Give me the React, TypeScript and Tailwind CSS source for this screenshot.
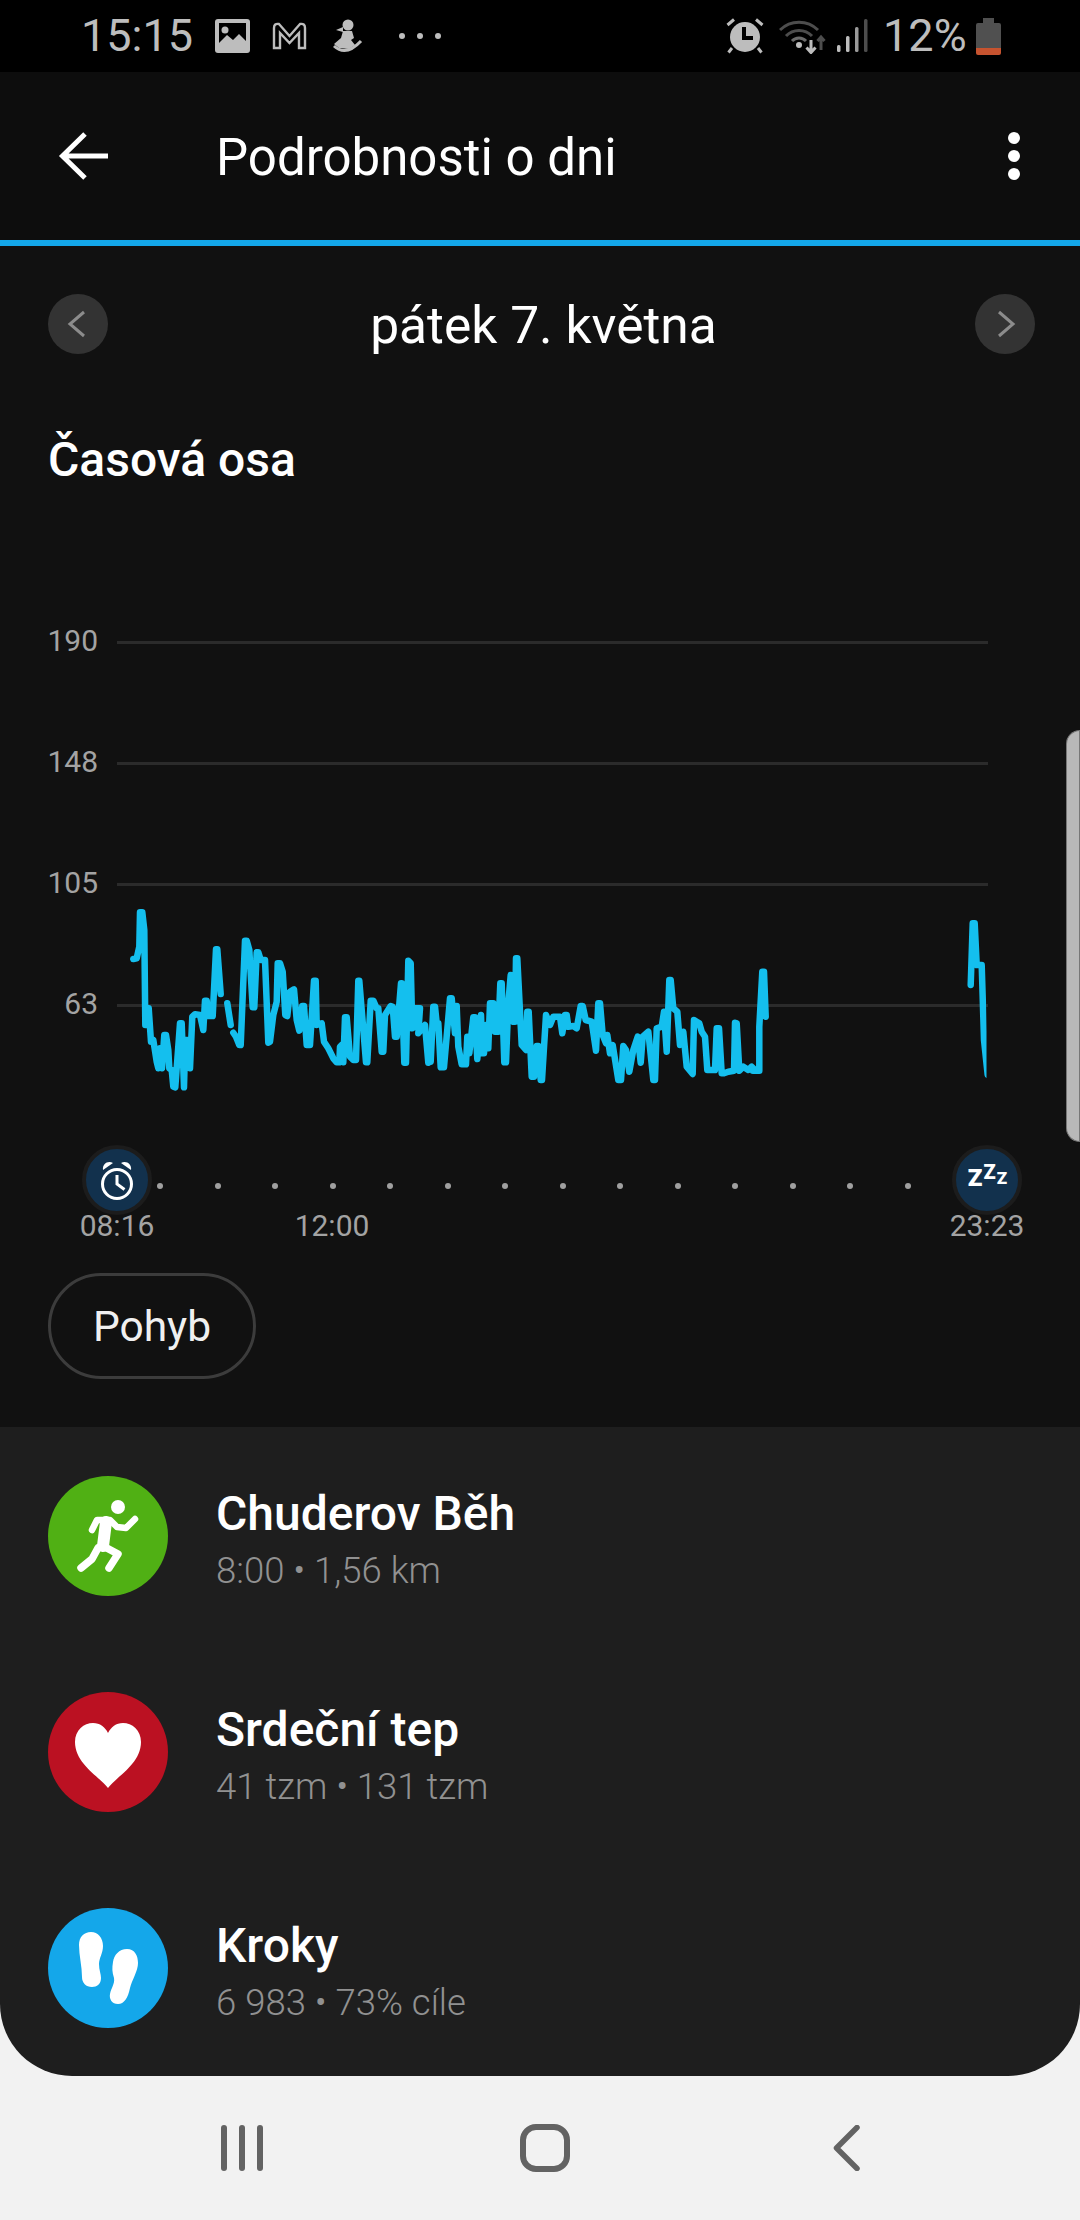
const gridLines = [
  { label: "190", y: 642.5 },
  { label: "148", y: 763.5 },
  { label: "105", y: 884.5 },
  { label: "63", y: 1005.5 },
];

// heart rate trace, sampled at 3x from the chart; each run has its own origin
const toPoints = (raw: number[][], ox: number, oy: number) =>
  raw.map(([x, y]) => `${(x / 3 + ox).toFixed(1)},${(y / 3 + oy).toFixed(1)}`).join(" ");

const runA = [
  [100, 237], [110, 235], [118, 200], [120, 97], [127, 97], [133, 150], [136, 435], [143, 435], [146, 385], [153, 485],
  [160, 480], [170, 545], [175, 565], [180, 505], [186, 565], [193, 465], [198, 465], [205, 510], [208, 565], [215, 570],
  [220, 620], [226, 622], [240, 430], [245, 430], [252, 622], [256, 480], [262, 480], [270, 565], [277, 410], [285, 403],
  [300, 405], [310, 450], [315, 362], [320, 362], [325, 408], [338, 408], [348, 208], [352, 208], [362, 342],
];
const runB = [[382, 370], [392, 435]];
const runC = [
  [400, 458], [408, 470], [418, 495], [422, 495], [435, 182], [440, 182], [448, 210], [458, 382], [463, 382], [470, 217],
  [475, 217], [482, 240], [495, 240], [505, 488], [510, 485], [520, 405], [530, 365], [533, 250], [540, 250], [548, 275],
  [556, 405], [562, 408], [570, 335], [582, 328], [590, 420], [598, 452], [607, 378], [612, 378], [620, 495], [630, 495],
  [642, 302], [647, 302], [650, 435], [665, 430], [672, 485], [685, 505], [700, 535], [710, 547], [718, 547], [720, 500],
  [725, 495], [730, 547], [735, 412], [740, 412], [750, 530], [760, 540], [768, 540], [775, 302], [778, 302], [798, 547],
  [802, 547], [812, 362], [820, 362], [830, 385], [835, 385], [845, 515], [850, 515], [855, 405], [872, 378], [878, 380],
  [885, 470], [890, 470], [903, 310], [905, 310], [913, 548], [918, 548], [925, 242], [932, 250], [937, 445], [945, 385],
  [960, 385], [955, 460], [975, 435], [985, 548],
];
const runD = [
  [25, 545], [32, 545], [40, 380], [45, 380], [50, 430], [55, 430], [62, 562], [72, 562], [90, 355], [95, 355],
  [105, 460], [110, 378], [115, 500], [125, 553], [138, 553], [142, 470], [148, 520], [160, 412], [165, 412], [172, 537],
  [183, 405], [187, 520], [192, 520], [198, 435], [205, 505], [210, 370], [220, 370], [225, 455], [235, 455], [241, 310],
  [245, 310], [253, 547], [258, 547], [265, 370], [272, 285], [280, 425], [285, 425], [288, 235], [292, 235], [305, 495],
  [318, 510], [322, 395], [326, 395], [335, 590], [342, 590], [350, 498], [355, 498], [362, 600], [366, 600], [378, 405],
  [390, 435], [400, 410], [420, 410], [427, 460], [435, 405], [440, 405], [445, 440], [460, 438], [470, 445], [482, 378],
  [488, 378], [497, 420], [515, 425], [528, 512], [535, 370], [540, 370], [548, 465], [558, 490], [562, 465], [570, 520],
  [578, 495], [595, 600], [603, 600], [610, 498], [618, 510], [628, 575], [640, 510], [653, 470], [662, 548], [668, 470],
  [685, 455], [700, 600], [705, 600], [710, 445], [725, 440], [732, 395], [740, 515], [748, 300], [752, 300], [760, 385],
  [772, 395], [780, 495], [790, 455], [800, 560], [818, 582], [822, 420], [830, 425], [838, 430], [845, 455], [855, 470],
  [862, 570], [885, 570], [890, 445], [897, 445], [905, 580], [912, 580], [925, 575], [942, 572], [945, 428], [950, 430],
  [958, 572], [970, 560], [985, 570], [995, 560], [1005, 570],
];
const runE = [[158, 362], [178, 362], [178, 230], [187, 65], [192, 65], [197, 200]];
const runF = [[122, 255], [128, 70], [134, 70], [140, 195], [155, 195], [162, 420], [173, 525]];

const firstPart = toPoints(runA, 100, 880);
const secondPart = toPoints(runB, 100, 880);
const thirdPart = `${toPoints(runC, 100, 880)} ${toPoints(runD, 420, 880)} ${toPoints(runE, 700, 950)}`;
const lastPart = toPoints(runF, 930, 900);

const dots = Array.from({ length: 14 }, (_, i) => i);

function StatusBar() {
  return (
    <div className="flex h-[72px] shrink-0 items-center bg-black pl-[81px] text-[#bdbdbd]">
      <span className="text-[45px] leading-[72px]">15:15</span>
      <svg className="ml-[22px]" width="35" height="34" viewBox="0 0 35 34">
        <rect width="35" height="34" rx="3" fill="#bdbdbd" />
        <rect x="4" y="4" width="27" height="24" fill="#000" />
        <circle cx="10" cy="11" r="3.5" fill="#bdbdbd" />
        <path d="M4 24 12 16 18 21 24 15 31 22V28H4Z" fill="#bdbdbd" />
      </svg>
      <svg className="ml-[22px]" width="35" height="28" viewBox="0 0 35 28">
        <path d="M2 26V6Q2 1 7 2L17.5 14 28 2Q33 1 33 6V26H27V11L17.5 21 8 11V26Z" fill="none" stroke="#bdbdbd" strokeWidth="2.4" />
      </svg>
      <svg className="ml-[25px]" width="31" height="34" viewBox="0 0 31 34">
        <circle cx="16" cy="6" r="5.5" fill="#bdbdbd" />
        <path d="M11 8 4 11 11 13Z" fill="#bdbdbd" />
        <path d="M11 12H20L22 19 19 21 23 26 17 30 7 29 2 25 9 19Z" fill="#bdbdbd" />
        <path d="M2 27Q14 38 29 22" fill="none" stroke="#bdbdbd" strokeWidth="3" />
      </svg>
      <div className="ml-[36px] flex gap-[12px]">
        <span className="h-[6px] w-[6px] rounded-full bg-[#bdbdbd]" />
        <span className="h-[6px] w-[6px] rounded-full bg-[#bdbdbd]" />
        <span className="h-[6px] w-[6px] rounded-full bg-[#bdbdbd]" />
      </div>
      <svg className="ml-[285px]" width="38" height="36" viewBox="0 0 38 36">
        <circle cx="19" cy="19" r="15" fill="#bdbdbd" />
        <path d="M18 9V20H27" fill="none" stroke="#000" strokeWidth="4" />
        <path d="M1.500 7 8 1.500M30 1.500 36.500 7M6 30 2.500 34.500M32 30 35.500 34.500" stroke="#bdbdbd" strokeWidth="3" />
      </svg>
      <svg className="ml-[15px]" width="48" height="36" viewBox="0 0 48 36">
        <path d="M1 12A27 27 0 0 1 39 12" fill="none" stroke="#4d4d4d" strokeWidth="3" />
        <path d="M7 18A18 18 0 0 1 33 18" fill="none" stroke="#4d4d4d" strokeWidth="3" />
        <path d="M13 23A9.500 9.500 0 0 1 27 23" fill="none" stroke="#6b6b6b" strokeWidth="3" />
        <circle cx="20" cy="27" r="3" fill="#bdbdbd" />
        <path d="M32 22V34M27.500 29.500 32 34.500 36.500 29.500" fill="none" stroke="#bdbdbd" strokeWidth="3" />
        <path d="M42 32V19M38.500 23 42 19 45.500 23" fill="none" stroke="#4d4d4d" strokeWidth="3" />
      </svg>
      <svg className="ml-[9px]" width="32" height="36" viewBox="0 0 32 36">
        <rect x="1" y="27" width="3.500" height="7" rx="1.500" fill="#bdbdbd" />
        <rect x="10" y="18" width="3.500" height="16" rx="1.500" fill="#bdbdbd" />
        <rect x="19" y="9" width="3.500" height="25" rx="1.500" fill="#9a9a9a" />
        <rect x="28" y="1" width="3.500" height="33" rx="1.500" fill="#4d4d4d" />
      </svg>
      <span className="ml-[15px] text-[45px] leading-[72px]">12%</span>
      <svg className="ml-[9px]" width="25" height="37" viewBox="0 0 25 37">
        <path d="M7 0H18V5H23Q25 5 25 7V30H0V7Q0 5 2 5H7Z" fill="#505050" />
        <path d="M0 30H25V35Q25 37 23 37H2Q0 37 0 35Z" fill="#c6532f" />
      </svg>
    </div>
  );
}

function Toolbar() {
  return (
    <div className="flex h-[168px] shrink-0 items-center bg-[#0d0d0d] text-white">
      <svg className="ml-[58px]" width="52" height="50" viewBox="0 0 52 50">
        <path d="M50 25H5M27 3 4.500 25 27 47" fill="none" stroke="#fff" strokeWidth="5" />
      </svg>
      <span className="ml-[106px] mt-[3px] text-[51px] leading-[60px]">Podrobnosti o dni</span>
      <div className="ml-auto mr-[60px] flex flex-col gap-[6px]">
        <span className="h-[12px] w-[12px] rounded-full bg-white" />
        <span className="h-[12px] w-[12px] rounded-full bg-white" />
        <span className="h-[12px] w-[12px] rounded-full bg-white" />
      </div>
    </div>
  );
}

function DayButton({ flip }: { flip?: boolean }) {
  return (
    <div className="flex h-[60px] w-[60px] items-center justify-center rounded-full bg-[#333333]">
      <svg width="60" height="60" viewBox="0 0 60 60">
        <path
          d={flip ? "M24 18 38 30 24 42" : "M36 18 22 30 36 42"}
          fill="none"
          stroke="#8c8c8c"
          strokeWidth="3"
        />
      </svg>
    </div>
  );
}

function Chart() {
  return (
    <svg className="block" width="1080" height="657" viewBox="0 488 1080 657">
      <defs>
        <clipPath id="plot">
          <rect x="90" y="488" width="896.500" height="657" />
        </clipPath>
      </defs>
      {gridLines.map((line) => (
        <g key={line.label}>
          <line x1="117" x2="988" y1={line.y} y2={line.y} stroke="#2b2b2b" strokeWidth="3" />
          <text
            x="98"
            y={line.y + 8}
            textAnchor="end"
            fontSize="30"
            fill="#a3a3a3"
            fontFamily="Roboto, sans-serif"
          >
            {line.label}
          </text>
        </g>
      ))}
      <g clipPath="url(#plot)" fill="none" stroke="#14bfee" strokeWidth="6.500" strokeLinejoin="round" strokeLinecap="round">
        <polyline points={firstPart} />
        <polyline points={secondPart} />
        <polyline points={thirdPart} />
        <polyline points={lastPart} />
      </g>
    </svg>
  );
}

function AlarmBadge() {
  return (
    <div className="flex h-[70px] w-[70px] items-center justify-center rounded-full border-[4px] border-[#1c1c1c] bg-[#12314d]">
      <svg width="62" height="62" viewBox="0 0 62 62">
        <circle cx="31" cy="35" r="14.500" fill="none" stroke="#fff" strokeWidth="3" />
        <path d="M31 26V35L38.500 40.500" fill="none" stroke="#fff" strokeWidth="3" />
        <path d="M17 21C16 15 22 11 27 14Z" fill="#fff" />
        <path d="M45 21C46 15 40 11 35 14Z" fill="#fff" />
      </svg>
    </div>
  );
}

function SleepBadge() {
  return (
    <div className="flex h-[70px] w-[70px] items-start justify-center rounded-full border-[4px] border-[#1c1c1c] bg-[#12314d] pl-[1px] pt-[16px] font-black leading-none text-white">
      <span className="mt-[3px] text-[24px] leading-[20px]">Z</span>
      <span className="ml-[1px] mt-[-3px] text-[20px] leading-[20px]">Z</span>
      <span className="ml-[1px] mt-[3px] text-[17px] leading-[20px]">Z</span>
    </div>
  );
}

function RunIcon() {
  return (
    <svg width="120" height="120" viewBox="0 0 120 120">
      <circle cx="70" cy="31" r="7" fill="#fff" />
      <path d="M44 54 49 44H62L69 51 78 52 87 43" fill="none" stroke="#fff" strokeWidth="6.500" strokeLinecap="round" strokeLinejoin="round" />
      <path d="M58 46 55 70" fill="none" stroke="#fff" strokeWidth="12" strokeLinecap="round" />
      <path d="M55 70 70 78 61 92" fill="none" stroke="#fff" strokeWidth="7.500" strokeLinecap="round" strokeLinejoin="round" />
      <path d="M50 72 44 83 33 92" fill="none" stroke="#fff" strokeWidth="7.500" strokeLinecap="round" strokeLinejoin="round" />
    </svg>
  );
}

function HeartIcon() {
  return (
    <svg width="120" height="120" viewBox="0 0 120 120">
      <path
        d="M60 96C52 85 27 72 27 50 27 38 36 31 45 31 52 31 57 35 60 41 63 35 68 31 75 31 84 31 93 38 93 50 93 72 68 85 60 96Z"
        fill="#fff"
      />
    </svg>
  );
}

function StepsIcon() {
  return (
    <svg width="120" height="120" viewBox="0 0 120 120">
      <path
        d="M43 24C50 24 55 30 55 38 55 45 51 50 51 56 51 62 53 66 53 70 53 76 49 79 44 79 38 79 34 75 34 69 34 58 31 48 31 37 31 29 36 24 43 24Z"
        fill="#fff"
      />
      <path
        d="M79 41C87 41 90 48 90 55 90 63 84 72 82 80 80 90 76 96 70 96 64 96 61 91 62 86 63 80 67 76 66 70 64 64 64 60 65 54 66 47 71 41 79 41Z"
        fill="#fff"
      />
    </svg>
  );
}

function ActivityRow({
  title,
  detail,
  iconClass,
  icon,
}: {
  title: string;
  detail: string;
  iconClass: string;
  icon: React.ReactNode;
}) {
  return (
    <div className="flex items-start gap-[48px]">
      <div className={`h-[120px] w-[120px] shrink-0 rounded-full ${iconClass}`}>{icon}</div>
      <div className="flex flex-col gap-[7px] pt-[10px]">
        <span className="text-[48px] font-medium leading-[56px] text-white">{title}</span>
        <span className="text-[36.500px] font-light leading-[44px] text-[#919191]">{detail}</span>
      </div>
    </div>
  );
}

export default function App() {
  return (
    <div className="relative flex h-[2220px] w-[1080px] flex-col overflow-hidden bg-[#f2f2f2] font-['Roboto',sans-serif]">
      <StatusBar />
      <Toolbar />
      <div className="h-[6px] shrink-0 bg-[#14a7ea]" />

      <div className="shrink-0 bg-[#111111] pb-[48px] pt-[48px]">
        <div className="flex h-[60px] items-start justify-between pl-[48px] pr-[45px]">
          <DayButton />
          <span className="ml-[4px] text-[51.500px] leading-[64px] text-white">pátek 7. května</span>
          <DayButton flip />
        </div>
        <h1 className="ml-[48px] mt-[78px] text-[48px] font-medium leading-[56px] text-white">Časová osa</h1>
        <Chart />
        <div className="ml-[82px] flex w-[940px]">
          <AlarmBadge />
          <div className="ml-[5px] mt-[38px] flex h-[6px] w-[754px] justify-between">
            {dots.map((dot) => (
              <span key={dot} className="h-[6px] w-[6px] rounded-full bg-[#a0a0a0]" />
            ))}
          </div>
          <div className="ml-auto">
            <SleepBadge />
          </div>
        </div>
        <div className="-mt-[5px] flex text-[30px] leading-[32px] text-[#a3a3a3]">
          <span className="ml-[57px] w-[120px] text-center">08:16</span>
          <span className="ml-[95px] w-[120px] text-center">12:00</span>
          <span className="ml-[535px] w-[120px] text-center">23:23</span>
        </div>
        <div className="ml-[48px] mt-[31px] flex h-[106px] w-[208px] items-center justify-center rounded-full border-[3px] border-[#3c3c3c] pt-[2px] text-[42.500px] text-[#f0f0f0]">
          Pohyb
        </div>
      </div>

      <div className="flex h-[649px] shrink-0 flex-col gap-[96px] rounded-b-[72px] bg-[#1e1e1e] px-[48px] pt-[49px]">
        <ActivityRow title="Chuderov Běh" detail="8:00 • 1,56 km" iconClass="bg-[#50b014]" icon={<RunIcon />} />
        <ActivityRow title="Srdeční tep" detail="41 tzm • 131 tzm" iconClass="bg-[#bb1122]" icon={<HeartIcon />} />
        <ActivityRow title="Kroky" detail="6 983 • 73% cíle" iconClass="bg-[#14a7ea]" icon={<StepsIcon />} />
      </div>

      <div className="flex flex-1 items-center bg-[#f2f2f2]">
        <div className="ml-[221px] flex gap-[12px]">
          <span className="h-[46px] w-[6px] rounded-full bg-[#636363]" />
          <span className="h-[46px] w-[6px] rounded-full bg-[#636363]" />
          <span className="h-[46px] w-[6px] rounded-full bg-[#636363]" />
        </div>
        <div className="ml-[257px] h-[48px] w-[50px] rounded-[16px] border-[6px] border-[#636363]" />
        <svg className="ml-[263px]" width="28" height="46" viewBox="0 0 28 46">
          <path d="M24 2.500 3.500 23 24 43.500" fill="none" stroke="#636363" strokeWidth="5.500" strokeLinecap="round" strokeLinejoin="round" />
        </svg>
      </div>

      {/* scroll handle sits over the chart edge */}
      <div className="absolute right-0 top-[730px] h-[412px] w-[14px] rounded-l-[14px] border border-[#777777] bg-[#b8b8b8]" />
    </div>
  );
}
